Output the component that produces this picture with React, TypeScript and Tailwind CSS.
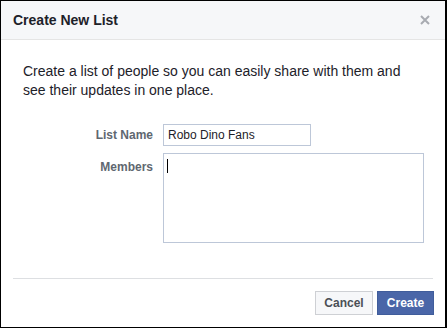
export default function App() {
  return (
    <div
      className="h-[328px] w-[447px] overflow-hidden border-t border-l border-r-2 border-b border-black bg-white"
      style={{ fontFamily: '"Liberation Sans", Arial, sans-serif' }}
    >
      <div className="flex h-[39px] items-center justify-between border-b border-[#e5e5e5] bg-[#f6f7f9] pl-[12px] pr-[12px]">
        <div className="text-[14px] font-bold text-[#1d2129]">Create New List</div>
        <svg width="10" height="10" viewBox="0 0 10 10" className="mr-[3px]">
          <path d="M1 1L9 9M9 1L1 9" stroke="#a8abb1" strokeWidth="2" />
        </svg>
      </div>

      <div className="px-[22px] pt-[22px] text-[14px] leading-[19px] text-[#1d2129]">
        <p>Create a list of people so you can easily share with them and</p>
        <p>see their updates in one place.</p>
      </div>

      <div className="mt-[24px] grid grid-cols-[152px_1fr] gap-x-[10px] gap-y-[7px] pr-[21px]">
        <label className="self-center text-right text-[12px] font-bold text-[#606770]">
          List Name
        </label>
        <input
          defaultValue="Robo Dino Fans"
          className="h-[22px] w-[148px] border border-[#bdc7d8] px-[4px] text-[12px] text-[#1d2129] outline-none"
        />
        <label className="pt-[5px] text-right text-[12px] font-bold text-[#606770]">
          Members
        </label>
        <div className="relative h-[90px] border border-[#bdc7d8]">
          <span className="absolute left-[3px] top-[5px] h-[14px] w-px bg-black" />
        </div>
      </div>

      <div className="mx-[12px] mt-[35px] border-t border-[#dddfe2]" />

      <div className="flex justify-end gap-[4px] pr-[11px] pt-[12px]">
        <button className="h-[24px] w-[58px] border border-[#ced0d4] bg-[#f6f7f9] text-[12px] font-bold text-[#4b4f56]">
          Cancel
        </button>
        <button className="h-[24px] w-[57px] border border-[#405d9b] bg-[#4a66a8] text-[12px] font-bold text-white">
          Create
        </button>
      </div>
    </div>
  );
}
